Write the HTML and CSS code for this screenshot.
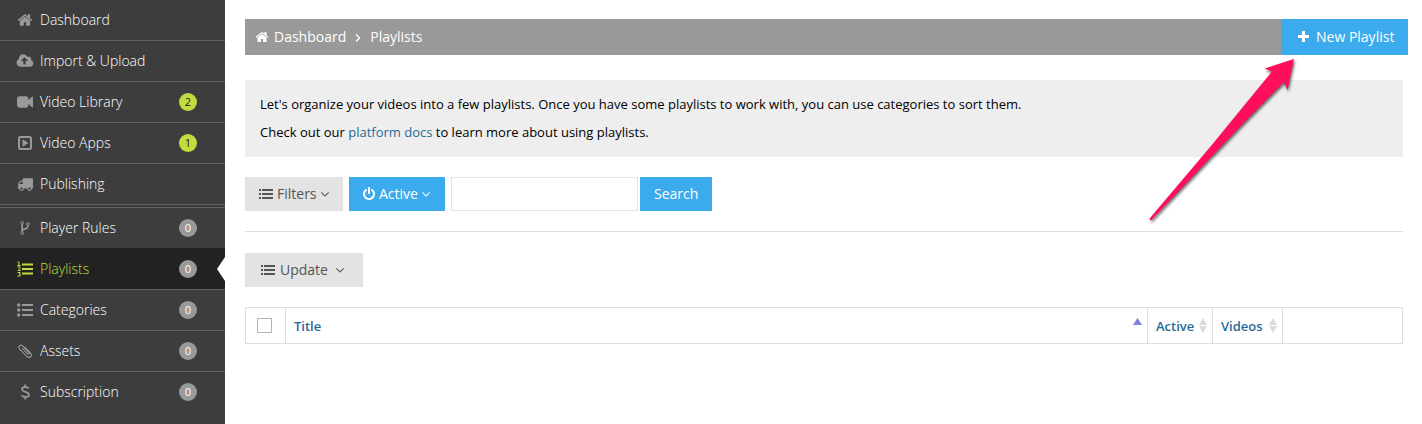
FILE: index.html
```html
<!DOCTYPE html>
<html lang="en">
<head>
<meta charset="utf-8">
<title>Playlists</title>
<link rel="stylesheet" href="styles.css">
</head>
<body>
<svg class="defs" width="0" height="0">
  <symbol id="home" viewBox="0 0 1792 1792"><path d="M1472 992v480q0 26-19 45t-45 19h-384v-384h-256v384h-384q-26 0-45-19t-19-45v-480q0-1 .5-3t.5-3l575-474 575 474q1 2 1 6zm223-69l-62 74q-8 9-21 11h-3q-13 0-21-7l-692-577-692 577q-12 8-24 7-13-2-21-11l-62-74q-8-10-7-23.5t11-21.5l719-599q32-26 76-26t76 26l244 204v-195q0-14 9-23t23-9h192q14 0 23 9t9 23v408l219 182q10 8 11 21.5t-7 23.5z"/></symbol>
  <symbol id="list" viewBox="0 0 14 14"><path d="M0 2h2v2H0zM3 2h11v2H3zM0 6h2v2H0zM3 6h11v2H3zM0 10h2v2H0zM3 10h11v2H3z"/></symbol>
  <symbol id="down" viewBox="384 0 1024 1792"><path d="M1395 736q0 13-10 23l-466 466q-10 10-23 10t-23-10l-466-466q-10-10-10-23t10-23l50-50q10-10 23-10t23 10l393 393 393-393q10-10 23-10t23 10l50 50q10 10 10 23z"/></symbol>
</svg>
<nav class="sidebar">
  <a class="item"><svg class="icon" viewBox="0 0 1792 1792"><use href="#home"/></svg><span class="label">Dashboard</span></a>
  <a class="item"><svg class="icon wide" viewBox="-64 0 2048 1792"><path d="M1280 864q0-14-9-23l-352-352q-9-9-23-9t-23 9l-351 351q-10 12-10 24 0 14 9 23t23 9h224v352q0 13 9.500 22.500t22.500 9.500h192q13 0 22.500-9.500t9.500-22.500v-352h224q13 0 22.500-9.500t9.500-22.500zm640 288q0 159-112.500 271.500t-271.500 112.500h-1088q-185 0-316.500-131.500t-131.500-316.500q0-130 70-240t188-165q-2-30-2-43 0-212 150-362t362-150q156 0 285.500 87t188.500 231q71-62 166-62 106 0 181 75t75 181q0 76-41 138 130 31 213.500 135.500t83.500 238.500z"/></svg><span class="label">Import &amp; Upload</span></a>
  <a class="item"><svg class="icon" viewBox="0 0 1792 1792"><path d="M1792 352v1088q0 42-39 59-13 5-25 5-27 0-45-19l-403-403v166q0 119-84.500 203.500t-203.500 84.500h-704q-119 0-203.500-84.500t-84.500-203.500v-704q0-119 84.500-203.500t203.500-84.500h704q119 0 203.500 84.500t84.500 203.500v165l403-402q18-19 45-19 12 0 25 5 39 17 39 59z"/></svg><span class="label">Video Library</span><span class="badge green">2</span></a>
  <a class="item"><svg class="icon" viewBox="0 0 16 16"><rect class="line" x="2" y="2" width="12" height="12" rx="1.500"/><path d="M5.500 4.300v7.400L11.500 8z"/></svg><span class="label">Video Apps</span><span class="badge green">1</span></a>
  <a class="item"><svg class="icon" viewBox="0 0 1792 1792"><path d="M640 1408q0-52-38-90t-90-38-90 38-38 90 38 90 90 38 90-38 38-90zm-384-512h384v-256h-158q-13 0-22 9l-195 195q-9 9-9 22v30zm1280 512q0-52-38-90t-90-38-90 38-38 90 38 90 90 38 90-38 38-90zm256-1088v1024q0 15-4 26.500t-13.500 18.500-16.500 11.500-23.500 6-22.500 2-25.500 0-22.500-.5q0 106-75 181t-181 75-181-75-75-181h-384q0 106-75 181t-181 75-181-75-75-181h-64q-3 0-22.500.5t-25.500 0-22.500-2-23.500-6-16.500-11.500-13.500-18.500-4-26.500q0-26 19-45t45-19v-320q0-8-.5-35t0-38 2.500-34.500 6.500-37 14-30.500 22.500-30l198-198q19-19 50.500-32t58.500-13h160v-192q0-26 19-45t45-19h1024q26 0 45 19t19 45z"/></svg><span class="label">Publishing</span></a>
  <div class="gap"></div>
  <a class="item"><svg class="icon" viewBox="0 0 1792 1792"><path d="M672 1472q0-40-28-68t-68-28-68 28-28 68 28 68 68 28 68-28 28-68zm0-1152q0-40-28-68t-68-28-68 28-28 68 28 68 68 28 68-28 28-68zm640 128q0-40-28-68t-68-28-68 28-28 68 28 68 68 28 68-28 28-68zm96 0q0 52-26 96.500t-70 69.500q-2 287-226 414-67 38-203 81-128 40-169.500 71t-41.500 100v26q44 25 70 69.500t26 96.500q0 80-56 136t-136 56-136-56-56-136q0-52 26-96.500t70-69.500v-820q-44-25-70-69.500t-26-96.500q0-80 56-136t136-56 136 56 56 136q0 52-26 96.500t-70 69.500v497q54-26 154-57 55-17 87.500-29.500t70.500-31 59-39.500 40.500-51 28-69.500 8.500-91.500q-44-25-70-69.500t-26-96.500q0-80 56-136t136-56 136 56 56 136z"/></svg><span class="label">Player Rules</span><span class="badge">0</span></a>
  <a class="item active"><svg class="icon" viewBox="0 0 16 16"><path d="M5 2.500h11v2H5zM5 7h11v2H5zM5 11.500h11v2H5z"/><path class="thin" d="M.5 1h1.500V4.500M.3 4.500h3.400M.5 6h2.500v1.500l-2 2h2.700M.5 11.500h2.700L2 13h1.200v2H.4"/></svg><span class="label">Playlists</span><span class="badge">0</span></a>
  <a class="item"><svg class="icon" viewBox="0 0 16 16"><circle cx="1.700" cy="3" r="1.700"/><circle cx="1.700" cy="8" r="1.700"/><circle cx="1.700" cy="13" r="1.700"/><path d="M5 2h11v2H5zM5 7h11v2H5zM5 12h11v2H5z"/></svg><span class="label">Categories</span><span class="badge">0</span></a>
  <a class="item"><svg class="icon" viewBox="0 0 16 16"><path class="clip" d="M5.300 5.300l5.200 5.300c1.200 1.100 2.500-.2 1.400-1.300L5.800 3.100C3.300.8.300 3.700 2.700 6.200l6.800 6.900c3.300 3.100 6.600-.3 3.900-3.200L7.600 4"/></svg><span class="label">Assets</span><span class="badge">0</span></a>
  <a class="item last"><svg class="icon" viewBox="0 0 16 16"><path class="dollar" d="M11.800 4.300C8.800 2.300 5 3 5 5.300c0 3.200 7 2 7 5.400 0 2.500-4.500 3.200-7.500.8M8.300.5v2.400M8.300 13v2.500"/></svg><span class="label">Subscription</span><span class="badge">0</span></a>
</nav>
<main class="content">
  <header class="crumbs">
    <svg class="ic14"><use href="#home"/></svg><span class="crumb">Dashboard</span>
    <svg class="sep" viewBox="0 0 6 8"><path d="M1 .5L4.500 4 1 7.500"/></svg><span>Playlists</span>
    <a class="new"><svg class="plus" viewBox="0 0 12 12"><path d="M4.300 0h3.400v4.300H12v3.400H7.700V12H4.300V7.700H0V4.300h4.300z"/></svg>New Playlist</a>
  </header>
  <section class="notice">
    <p>Let's organize your videos into a few playlists. Once you have some playlists to work with, you can use categories to sort them.</p>
    <p>Check out our <a>platform docs</a> to learn more about using playlists.</p>
  </section>
  <div class="toolbar">
    <a class="btn filters"><svg class="ic14"><use href="#list"/></svg>Filters<svg class="chev"><use href="#down"/></svg></a>
    <a class="btn blue status"><svg class="power" viewBox="128 0 1536 1792"><path d="M1664 896q0 156-61 298t-164 245-245 164-298 61-298-61-245-164-164-245-61-298q0-182 80.500-343t226.500-270q43-32 95.500-25t83.500 50q32 42 24.500 94.500t-49.500 84.500q-98 74-151.500 181t-53.500 228q0 104 40.500 198.500t109.500 163.500 163.500 109.500 198.500 40.500 198.500-40.500 163.500-109.500 109.500-163.500 40.500-198.500q0-121-53.500-228t-151.500-181q-42-32-49.500-84.500t24.500-94.500q31-43 84-50t95 25q146 109 226.500 270t80.500 343zm-640-768v640q0 52-38 90t-90 38-90-38-38-90v-640q0-52 38-90t90-38 90 38 38 90z"/></svg>Active<svg class="chev"><use href="#down"/></svg></a>
    <input class="query" type="text" aria-label="Search playlists">
    <a class="btn blue search">Search</a>
  </div>
  <div class="bulk"><a class="btn update"><svg class="ic14"><use href="#list"/></svg>Update<svg class="chev"><use href="#down"/></svg></a></div>
  <div class="table">
    <div class="cell check"><span class="box"></span></div>
    <div class="cell">Title<svg class="up" viewBox="0 0 9 7"><path d="M4.500 0L9 7H0z"/></svg></div>
    <div class="cell">Active<svg class="sort" viewBox="0 0 8 15"><path d="M4 0l4 7H0zM0 8h8l-4 7z"/></svg></div>
    <div class="cell">Videos<svg class="sort" viewBox="0 0 8 15"><path d="M4 0l4 7H0zM0 8h8l-4 7z"/></svg></div>
    <div class="cell"></div>
  </div>
</main>
<svg class="pointer" viewBox="1140 50 170 180"><path d="M1294 59L1264.500 68.500 1272 71.500Q1242 108 1211 146L1150 218Q1149 220.500 1151.500 220L1213 155Q1249 117 1284 82L1287.500 90z"/></svg>
</body>
</html>
```
FILE: styles.css
```css
* { box-sizing: border-box; }
body {
  margin: 0;
  height: 424px;
  display: flex;
  overflow: hidden;
  background: #fff;
  font: 14px/20px "Open Sans", sans-serif;
}
svg { fill: currentColor; flex: none; }
.defs { position: absolute; }

.sidebar { width: 225px; flex: none; background: #3d3d3d; color: #fff; }
.item {
  display: flex;
  align-items: center;
  height: 41px;
  padding: 0 28px 0 17px;
  border-bottom: 1px solid #606060;
  font-weight: 300;
  position: relative;
}
.icon { width: 16px; height: 16px; margin-right: 7px; color: #999; }
.icon.wide { width: 18px; margin: 0 6px 0 -1px; }
.label { flex: 1; }
.gap { height: 3px; border-bottom: 1px solid #606060; }
.gap + .item { border-bottom: 0; height: 40px; }
.item.active { height: 42px; background: #222; color: #c1dc3c; }
.active .icon { color: #c1dc3c; }
.active::after {
  content: "";
  position: absolute;
  right: 0;
  top: 9px;
  border: solid transparent;
  border-width: 12px 8px 12px 0;
  border-right-color: #fff;
}
.item.last { height: 40px; border-bottom: 0; }
.badge {
  width: 18px;
  height: 18px;
  border-radius: 50%;
  background: #999;
  color: #fff;
  font-size: 11px;
  font-weight: 400;
  line-height: 17px;
  text-align: center;
}
.badge.green { background: #c1dc3c; color: #222; }
.line { fill: none; stroke: currentColor; stroke-width: 2; }
.thin { fill: none; stroke: currentColor; stroke-width: 1; }
.clip { fill: none; stroke: currentColor; stroke-width: 1.1; }
.dollar { fill: none; stroke: currentColor; stroke-width: 1.8; }

.content { flex: 1; padding: 19px 19px 0 20px; }
.ic14 { width: 14px; height: 14px; }
.crumbs {
  display: flex;
  align-items: center;
  height: 36px;
  margin-right: -5px;
  padding-left: 10px;
  background: #999;
  color: #fff;
}
.crumb { margin-left: 5px; }
.sep { width: 6px; height: 8px; margin: 1px 9px 0 9px; fill: none; stroke: #fff; stroke-width: 1.4; }
.new {
  display: flex;
  align-items: center;
  align-self: stretch;
  width: 127px;
  margin-left: auto;
  padding-left: 17px;
  background: #3babed;
}
.plus { width: 11px; height: 11px; margin: 0 7px 1px 0; }
.notice {
  height: 77px;
  margin-top: 25px;
  padding: 15px;
  background: #eee;
  color: #000;
  font-size: 13px;
  line-height: 18px;
}
.notice p { margin: 0 0 10px; }
.notice a { color: #1f6a96; }
.toolbar {
  display: flex;
  height: 55px;
  margin-top: 20px;
  border-bottom: 1px solid #ddd;
}
.btn {
  display: flex;
  align-items: center;
  height: 34px;
  padding-left: 14px;
  background: #e3e3e3;
  color: #555;
}
.btn.blue { background: #3babed; color: #fff; }
.btn .ic14 { margin-right: 4px; }
.power { width: 12px; height: 14px; margin-right: 4px; }
.chev { width: 8px; height: 14px; margin-left: 4px; }
.filters { width: 98px; margin-right: 6px; }
.status { width: 96px; margin-right: 6px; }
.query { width: 187px; height: 34px; border: 1px solid #e3e3e3; outline: 0; }
.search { width: 72px; margin-left: 2px; }
.bulk { padding-top: 21px; }
.update { width: 118px; padding-left: 16px; }
.update .ic14 { margin-right: 5px; }
.update .chev { margin-left: 8px; }
.table {
  display: grid;
  grid-template-columns: 40px 1fr 65px 70px 119px;
  height: 37px;
  margin-top: 20px;
  border: 1px solid #ddd;
}
.cell {
  display: flex;
  align-items: center;
  justify-content: space-between;
  padding: 0 5px 0 8px;
  border-right: 1px solid #ddd;
  color: #1f6a96;
  font-size: 13px;
  font-weight: 600;
}
.cell:last-child { border-right: 0; }
.check { padding: 0 0 0 11px; }
.box { width: 15px; height: 15px; border: 1px solid #b5b5b5; }
.up { width: 9px; height: 7px; margin-bottom: 9px; color: #7f7fe0; }
.sort { width: 8px; height: 15px; margin-bottom: 1px; color: #dcdcdc; }
.pointer {
  position: absolute;
  left: 1140px;
  top: 50px;
  width: 170px;
  height: 180px;
  fill: #ff0f5b;
  filter: drop-shadow(1px 2px 1.5px rgba(0, 0, 0, .6));
}
```
